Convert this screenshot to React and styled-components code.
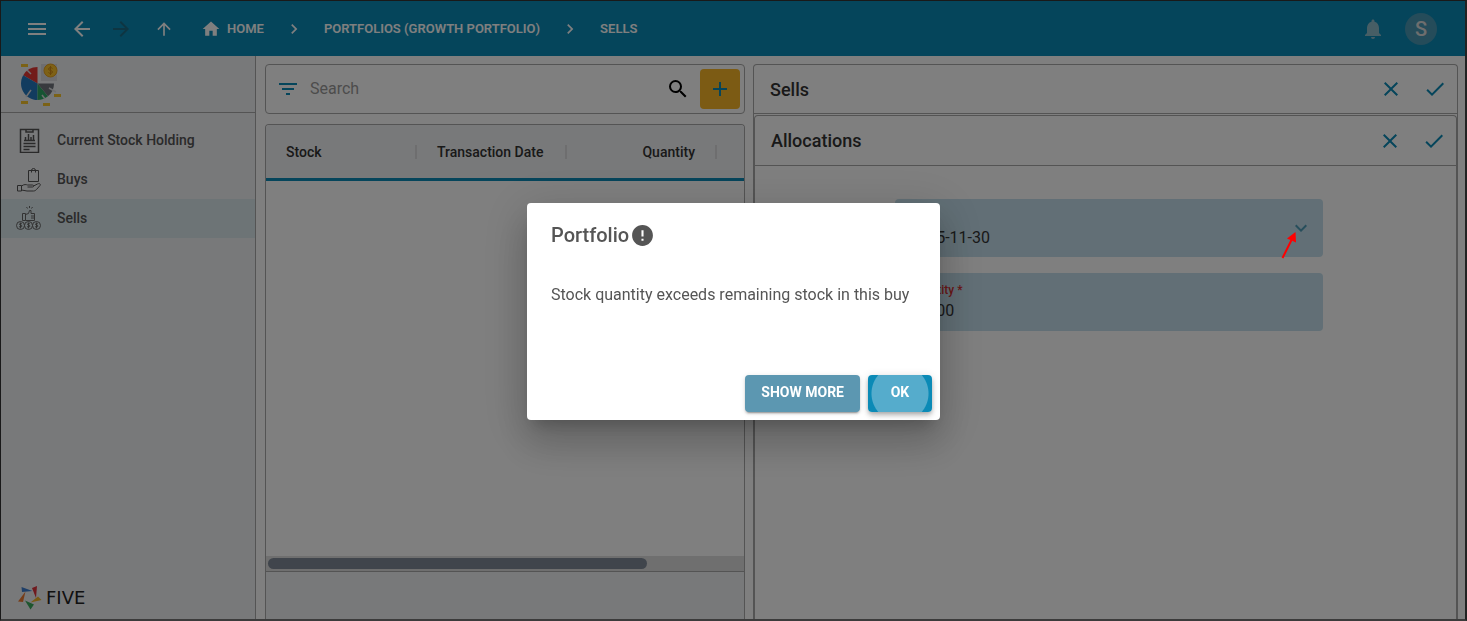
import styled, { createGlobalStyle } from 'styled-components'
import {
  MdAdd,
  MdArrowBack,
  MdArrowForward,
  MdArrowUpward,
  MdCheck,
  MdChevronRight,
  MdClose,
  MdError,
  MdFilterList,
  MdHome,
  MdKeyboardArrowDown,
  MdMenu,
  MdNotifications,
  MdSearch,
} from 'react-icons/md'

const GlobalStyle = createGlobalStyle`
  * {
    box-sizing: border-box;
  }

  body {
    margin: 0;
    font-family: Roboto, "Liberation Sans", sans-serif;
    color: #333;
  }

  button, input, select {
    font-family: inherit;
  }
`

const Page = styled.div`
  display: flex;
  flex-direction: column;
  height: 100vh;
  border: 1px solid #333;
  border-right: 2px solid #444;
  border-bottom: 2px solid #777;
  background: white;
`

const TopBar = styled.header`
  display: flex;
  align-items: center;
  flex-shrink: 0;
  height: 55px;
  padding: 0 28px 0 24px;
  background: #0b8ab6;
  color: white;
`

const IconButton = styled.button`
  display: flex;
  align-items: center;
  justify-content: center;
  width: ${(props) => props.$width || 24}px;
  height: 24px;
  padding: 0;
  border: none;
  background: none;
  color: ${(props) => props.$color || '#0b8ab6'};
  cursor: pointer;
`

const HistoryButtons = styled.div`
  display: flex;
  align-items: center;
  gap: 15px;
  margin: 0 21px 0 6px;
  padding-left: 15px;
`

const Breadcrumbs = styled.nav`
  display: flex;
  align-items: center;
  flex: 1;
  gap: 20px;
`

const Crumb = styled.a`
  display: flex;
  align-items: center;
  gap: 6px;
  color: white;
  font-size: 13px;
  font-weight: 600;
  text-decoration: none;
`

const UserArea = styled.div`
  display: flex;
  align-items: center;
  gap: 20px;
`

const Avatar = styled.button`
  width: 32px;
  height: 32px;
  padding: 0;
  border: none;
  border-radius: 50%;
  background: #4a98b4;
  color: #ddd;
  font-size: 20px;
  font-weight: 500;
`

const Body = styled.div`
  display: flex;
  flex: 1;
  min-height: 0;
`

const Sidebar = styled.aside`
  display: flex;
  flex-direction: column;
  width: 255px;
  flex-shrink: 0;
  border-right: 1px solid #a8a8a8;
  background: #f1f2f5;
`

const SidebarHeader = styled.div`
  height: 57px;
  padding: 6px 18px;
  border-bottom: 1px solid #a8a8a8;
`

const Menu = styled.nav`
  display: flex;
  flex-direction: column;
  flex: 1;
  padding-top: 8px;
`

const MenuItem = styled.a`
  display: flex;
  align-items: center;
  gap: 16px;
  height: 39px;
  padding-left: 15px;
  background: ${(props) => (props.$active ? '#dbe9ed' : 'transparent')};
  color: #555;
  font-size: 14px;
  font-weight: 500;
  text-decoration: none;
`

const MenuText = styled.span`
  padding-bottom: 2px;
`

const Brand = styled.div`
  display: flex;
  align-items: center;
  gap: 4px;
  padding: 0 16px 9px;
  color: #222;
  font-family: "DejaVu Sans", sans-serif;
  font-size: 18px;
  line-height: 24px;
`

const Content = styled.main`
  display: grid;
  grid-template-columns: minmax(0, 32fr) minmax(0, 47fr);
  flex: 1;
  gap: 8px;
  min-width: 0;
  padding: 8px 7px 0 9px;
`

const ListColumn = styled.section`
  display: flex;
  flex-direction: column;
  gap: 10px;
  min-height: 0;
`

const SearchBar = styled.div`
  display: flex;
  align-items: center;
  height: 50px;
  padding: 0 4px 0 10px;
  border: 1px solid #a8a8a8;
  border-radius: 4px;
`

const SearchInput = styled.input`
  flex: 1;
  min-width: 0;
  padding: 0 10px 2px;
  border: none;
  outline: none;
  background: none;
  font-size: 16px;

  &::placeholder {
    color: #999;
  }
`

const AddButton = styled.button`
  display: flex;
  align-items: center;
  justify-content: center;
  width: 40px;
  height: 40px;
  margin-left: 10px;
  padding: 0;
  border: none;
  border-radius: 4px;
  background: #f8b628;
  color: #0b8ab6;
`

const Grid = styled.div`
  display: flex;
  flex-direction: column;
  flex: 1;
  min-height: 0;
  border: 1px solid #a8a8a8;
  border-bottom: none;
  border-radius: 4px 4px 0 0;
  overflow: hidden;
`

const GridBody = styled.div`
  flex: 1;
`

const Table = styled.table`
  width: 100%;
  table-layout: fixed;
  border-collapse: separate;
  border-spacing: 0;
  background: #f1f2f5;
`

const Th = styled.th`
  width: ${(props) => props.$width || 'auto'};
  height: 56px;
  padding: 0;
  border-bottom: 3px solid #0b8ab6;
  font-size: 14px;
  font-weight: 500;
`

const HeadCell = styled.div`
  padding: 0 20px;
  border-right: 2px solid #dcdcdf;
  line-height: 14px;
  text-align: ${(props) => props.$align || 'left'};
  white-space: nowrap;
`

const ScrollTrack = styled.div`
  height: 15px;
  padding: 2px;
  background: #dedede;
`

const ScrollThumb = styled.div`
  width: 80%;
  height: 11px;
  border-radius: 6px;
  background: #808b99;
`

const GridFooter = styled.div`
  height: 48px;
  border-top: 1px solid #a8a8a8;
  background: #f1f2f5;
`

const Panel = styled.section`
  display: flex;
  flex-direction: column;
  gap: ${(props) => (props.$nested ? 0 : 1)}px;
  flex: 1;
  min-height: 0;
  border: 1px solid #a8a8a8;
  border-bottom: none;
  border-radius: 4px 4px 0 0;
`

const PanelHeader = styled.div`
  display: flex;
  align-items: center;
  gap: 20px;
  height: ${(props) => props.$height}px;
  padding: 0 10px 0 16px;
  border-bottom: 1px solid #a8a8a8;
`

const PanelTitle = styled.h2`
  flex: 1;
  margin: 0;
  font-size: 18px;
  font-weight: 500;
`

const Form = styled.form`
  display: flex;
  flex-direction: column;
  gap: 16px;
  padding: 33px 19% 0 20%;
`

const Field = styled.div`
  display: flex;
  align-items: center;
  height: 58px;
  padding: 0 10px 0 14px;
  border-radius: 4px;
  background: #c4dfec;
  color: #4f9db8;
`

const FieldBody = styled.div`
  flex: 1;
`

const Label = styled.label`
  display: block;
  color: ${(props) => (props.$error ? '#d32f2f' : '#555')};
  font-size: 12px;
  font-weight: 500;
  line-height: 16px;
`

const fieldText = `
  display: block;
  width: 100%;
  height: 24px;
  padding: 0;
  border: none;
  outline: none;
  appearance: none;
  background: none;
  color: #333;
  font-size: 16px;
`

const Select = styled.select`
  ${fieldText}
  padding-top: 2px;
`

const Input = styled.input`
  ${fieldText}
`

const FieldMark = styled.div`
  position: relative;
  display: flex;
`

/* stays above the backdrop */
const Pointer = styled.svg`
  position: absolute;
  z-index: 1;
  top: 14px;
  left: -8px;
`

const Backdrop = styled.div`
  position: fixed;
  inset: 0;
  display: flex;
  align-items: center;
  justify-content: center;
  padding-top: 2px;
  background: rgba(0, 0, 0, 0.5);
`

const Dialog = styled.div`
  display: flex;
  flex-direction: column;
  width: 413px;
  border-radius: 4px;
  background: white;
  color: #555;
  box-shadow: 0 11px 15px -7px rgba(0, 0, 0, 0.2), 0 24px 38px 3px rgba(0, 0, 0, 0.14),
    0 9px 46px 8px rgba(0, 0, 0, 0.12);
`

const DialogTitle = styled.h2`
  display: flex;
  align-items: center;
  gap: 1px;
  margin: 0;
  padding: 16px 24px;
  font-size: 20px;
  font-weight: 500;
  line-height: 32px;
`

const DialogText = styled.p`
  margin: 0;
  padding: 16px 24px 64px;
  font-size: 16px;
  line-height: 24px;
`

const DialogActions = styled.div`
  display: flex;
  justify-content: flex-end;
  gap: 8px;
  padding: 4px 8px 8px;
`

const DialogButton = styled.button`
  height: 37px;
  min-width: 64px;
  padding: 0 16px 4px;
  border: none;
  border-radius: 4px;
  background: #5c97b1;
  color: white;
  font-size: 14px;
  font-weight: 700;
  box-shadow: 0 3px 1px -2px rgba(0, 0, 0, 0.2), 0 2px 2px 0 rgba(0, 0, 0, 0.14),
    0 1px 5px 0 rgba(0, 0, 0, 0.12);
`

/* focused button with the ripple in its middle */
const OkButton = styled(DialogButton)`
  background: radial-gradient(circle at center, #55accc 28px, #0b8ab6 29px);
  box-shadow: 0 2px 4px -1px rgba(0, 0, 0, 0.2), 0 4px 5px 0 rgba(0, 0, 0, 0.14),
    0 1px 10px 0 rgba(0, 0, 0, 0.12);
`

const AppLogo = () => (
  <svg width="44" height="44" viewBox="0 0 44 44">
    <path d="M22 2h16v17H22z" fill="#dcdde0" />
    <path d="M18.500 21.500V5a16.500 16.500 0 0 0-14.300 8.300z" fill="#e53935" />
    <path d="M18.500 21.500L4.200 13.300A16.500 16.500 0 0 0 18.500 38z" fill="#2478be" />
    <path d="M18.500 21.500V38a16.500 16.500 0 0 0 10.500-3.700z" fill="#2fa866" />
    <path d="M18.500 21.500L29 34.300a16.500 16.500 0 0 0 6-12.800z" fill="#70757c" />
    <path d="M8 8l4 4M7 35l5-7M23 33l3 4M30 26l7 4" stroke="#dcdde0" strokeWidth="1.500" />
    <path d="M2 2h7v3H2zM2 39h7v3H2zM24 41h7v3h-7zM35 32h7v3h-7z" fill="#f6c52c" />
    <circle cx="31.500" cy="8.500" r="6.500" fill="#fcc22c" stroke="#e9a31c" />
    <path
      d="M33.500 6.500c-1-1.500-4-1-4 .5 0 2 4 1 4 3 0 1.500-3 2-4 .5M31.500 4v9"
      fill="none"
      stroke="#d28b16"
    />
  </svg>
)

const StockIcon = () => (
  <svg width="25" height="25" viewBox="0 0 25 25" fill="none" stroke="#555">
    <rect x="4.500" y="1.500" width="18" height="23" strokeWidth="1.500" />
    <path d="M10 1.500v2.500h7V1.500" strokeWidth="1.500" />
    <path d="M8 12.500h11M9.500 12V9M12.500 12V6M15 12V9M17.500 12V7" strokeWidth="1.500" />
    <path d="M7.500 15.500h12M7.500 18.500h12M7.500 21.500h6" strokeWidth="1.500" />
  </svg>
)

const BuysIcon = () => (
  <svg width="25" height="25" viewBox="0 0 25 25" fill="none" stroke="#555">
    <path d="M12.500 3.500h10v11h-10zM15.500 5.500V3.500a2 2 0 0 1 4 0v2" />
    <path d="M1.500 18.500h4v5.500h-4z" />
    <path d="M5.500 19c3-2 4.500-1.500 6-1h5c1.500 0 1.500 2 0 2h-5M17.500 19l4-2c2-1 3.500 0 2.500 1.500l-3.500 4c-1 1-2 1.500-3 1.500H11l-5.500-1" />
  </svg>
)

const SellsIcon = () => (
  <svg width="25" height="25" viewBox="0 0 25 25" fill="none" stroke="#666">
    <path d="M6.500 7.500h3v7h-3zM9.500 8.500l3-1 1-3h1.500v3h3.500v7h-9M15 10h3.500M15 12h3.500" />
    <path d="M10.500 1l1 1.500M13.500 0v2M16.500 1l-1 1.500" />
    <circle cx="4.500" cy="19.500" r="4" />
    <circle cx="12.500" cy="19.500" r="4" />
    <circle cx="20.500" cy="19.500" r="4" />
    <path d="M6 18c-1-1-3-.5-2.500.5s2.500.5 2.500 1.500-2 1.500-3 .5M4.500 16.500v6M14 18c-1-1-3-.5-2.500.5s2.500.5 2.500 1.500-2 1.500-3 .5M12.500 16.500v6M22 18c-1-1-3-.5-2.500.5s2.500.5 2.500 1.500-2 1.500-3 .5M20.500 16.500v6" />
  </svg>
)

const FiveMark = () => (
  <svg width="25" height="25" viewBox="0 0 25 25">
    <path d="M4.500 2l11 4-10.500 1z" fill="#3f7fd0" />
    <path d="M15 3l5-2-1 12z" fill="#e0343c" />
    <path d="M13.500 17.500l7.500-6 3.500 3.500z" fill="#f0b428" />
    <path d="M8 15.500l9 4-3.500 5z" fill="#3bab5c" />
    <path d="M1 16.500L8.500 6.500 6 17z" fill="#ee7a30" />
  </svg>
)

const PanelButtons = () => (
  <>
    <IconButton type="button" aria-label="Cancel">
      <MdClose size={24} />
    </IconButton>
    <IconButton type="button" aria-label="Save">
      <MdCheck size={24} />
    </IconButton>
  </>
)

const App = () => {
  return (
    <>
      <GlobalStyle />
      <Page>
        <TopBar>
          <IconButton $color="white" aria-label="Menu">
            <MdMenu size={24} />
          </IconButton>
          <HistoryButtons>
            <IconButton $color="white" aria-label="Back">
              <MdArrowBack size={24} />
            </IconButton>
            <IconButton $color="#1c6a84" aria-label="Forward">
              <MdArrowForward size={24} />
            </IconButton>
            <IconButton $color="white" $width={32} aria-label="Up">
              <MdArrowUpward size={20} />
            </IconButton>
          </HistoryButtons>

          <Breadcrumbs>
            <Crumb href="#home">
              <MdHome size={20} />
              HOME
            </Crumb>
            <MdChevronRight size={20} />
            <Crumb href="#portfolios">PORTFOLIOS (GROWTH PORTFOLIO)</Crumb>
            <MdChevronRight size={20} />
            <Crumb href="#sells">SELLS</Crumb>
          </Breadcrumbs>

          <UserArea>
            <IconButton $color="#8fbccb" aria-label="Notifications">
              <MdNotifications size={24} />
            </IconButton>
            <Avatar aria-label="Account">S</Avatar>
          </UserArea>
        </TopBar>

        <Body>
          <Sidebar>
            <SidebarHeader>
              <AppLogo />
            </SidebarHeader>
            <Menu>
              <MenuItem href="#stock">
                <StockIcon />
                <MenuText>Current Stock Holding</MenuText>
              </MenuItem>
              <MenuItem href="#buys">
                <BuysIcon />
                <MenuText>Buys</MenuText>
              </MenuItem>
              <MenuItem href="#sells" $active>
                <SellsIcon />
                <MenuText>Sells</MenuText>
              </MenuItem>
            </Menu>
            <Brand>
              <FiveMark />
              FIVE
            </Brand>
          </Sidebar>

          <Content>
            <ListColumn>
              <SearchBar>
                <IconButton aria-label="Filter">
                  <MdFilterList size={24} />
                </IconButton>
                <SearchInput type="text" placeholder="Search" aria-label="Search" />
                <IconButton $color="black" aria-label="Run search">
                  <MdSearch size={24} />
                </IconButton>
                <AddButton aria-label="Add">
                  <MdAdd size={24} />
                </AddButton>
              </SearchBar>

              <Grid>
                <Table>
                  <thead>
                    <tr>
                      <Th $width="151px">
                        <HeadCell>Stock</HeadCell>
                      </Th>
                      <Th $width="150px">
                        <HeadCell>Transaction Date</HeadCell>
                      </Th>
                      <Th $width="150px">
                        <HeadCell $align="right">Quantity</HeadCell>
                      </Th>
                      <Th />
                    </tr>
                  </thead>
                </Table>
                <GridBody />
                <ScrollTrack>
                  <ScrollThumb />
                </ScrollTrack>
                <GridFooter />
              </Grid>
            </ListColumn>

            <Panel>
              <PanelHeader $height={49}>
                <PanelTitle>Sells</PanelTitle>
                <PanelButtons />
              </PanelHeader>
              <Panel $nested>
                <PanelHeader $height={50}>
                  <PanelTitle>Allocations</PanelTitle>
                  <PanelButtons />
                </PanelHeader>
                <Form>
                  <Field>
                    <FieldBody>
                      <Label htmlFor="buy">Buy</Label>
                      <Select id="buy" defaultValue="2015-11-30">
                        <option>2015-11-30</option>
                      </Select>
                    </FieldBody>
                    <FieldMark>
                      <MdKeyboardArrowDown size={24} />
                      <Pointer width="20" height="30" viewBox="0 0 20 30">
                        <path d="M1.500 28L10.500 10" stroke="red" strokeWidth="2" />
                        <path d="M14.500 2L6 8.500l9 4z" fill="red" />
                      </Pointer>
                    </FieldMark>
                  </Field>
                  <Field>
                    <FieldBody>
                      <Label htmlFor="quantity" $error>
                        Quantity *
                      </Label>
                      <Input id="quantity" type="text" defaultValue="10000" />
                    </FieldBody>
                  </Field>
                </Form>
              </Panel>
            </Panel>
          </Content>
        </Body>
      </Page>

      <Backdrop>
        <Dialog role="alertdialog" aria-modal="true" aria-labelledby="dialog-title">
          <DialogTitle id="dialog-title">
            Portfolio
            <MdError size={25} />
          </DialogTitle>
          <DialogText>Stock quantity exceeds remaining stock in this buy</DialogText>
          <DialogActions>
            <DialogButton>SHOW MORE</DialogButton>
            <OkButton>OK</OkButton>
          </DialogActions>
        </Dialog>
      </Backdrop>
    </>
  )
}

export default App
